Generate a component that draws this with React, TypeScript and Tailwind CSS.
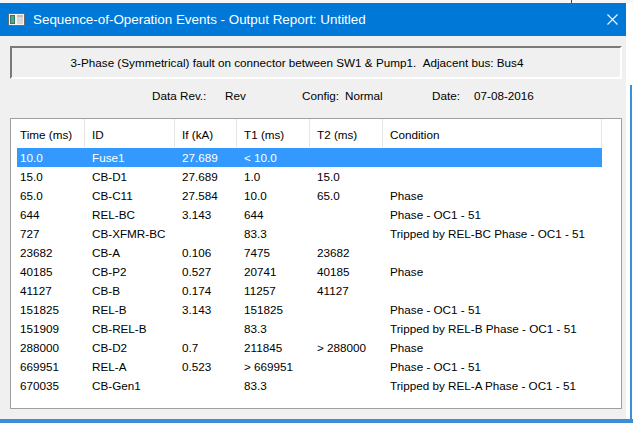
import React from 'react';

type Row = [string, string, string, string, string, string];

const ROWS: Row[] = [
    ['10.0', 'Fuse1', '27.689', '< 10.0', '', ''],
    ['15.0', 'CB-D1', '27.689', '1.0', '15.0', ''],
    ['65.0', 'CB-C11', '27.584', '10.0', '65.0', 'Phase'],
    ['644', 'REL-BC', '3.143', '644', '', 'Phase - OC1 - 51'],
    ['727', 'CB-XFMR-BC', '', '83.3', '', 'Tripped by REL-BC Phase - OC1 - 51'],
    ['23682', 'CB-A', '0.106', '7475', '23682', ''],
    ['40185', 'CB-P2', '0.527', '20741', '40185', 'Phase'],
    ['41127', 'CB-B', '0.174', '11257', '41127', ''],
    ['151825', 'REL-B', '3.143', '151825', '', 'Phase - OC1 - 51'],
    ['151909', 'CB-REL-B', '', '83.3', '', 'Tripped by REL-B Phase - OC1 - 51'],
    ['288000', 'CB-D2', '0.7', '211845', '> 288000', 'Phase'],
    ['669951', 'REL-A', '0.523', '> 669951', '', 'Phase - OC1 - 51'],
    ['670035', 'CB-Gen1', '', '83.3', '', 'Tripped by REL-A Phase - OC1 - 51'],
];

const HEADERS = ['Time (ms)', 'ID', 'If (kA)', 'T1 (ms)', 'T2 (ms)', 'Condition'];

// widths of columns 2..6 (first column differs between header and rows)
const COL_W = ['w-[90px]', 'w-[62px]', 'w-[73px]', 'w-[73px]', 'w-[219px]'];

const font = { fontFamily: '"Liberation Sans", Arial, sans-serif' };

const WindowIcon = () => (
    <svg width="17" height="13" viewBox="0 0 17 13">
        <rect x="0.5" y="0.5" width="16" height="12" fill="#f4f4f4" stroke="#6b6b6b" />
        <rect x="2" y="2" width="5" height="9" fill="#2f7a6a" />
        <rect x="3" y="3" width="3" height="7" fill="#5aa07a" />
        <rect x="9" y="2" width="6" height="9" fill="#d8d8d8" />
        <rect x="9" y="2" width="6" height="2" fill="#bdbdbd" />
    </svg>
);

const CloseIcon = () => (
    <svg width="11" height="11" viewBox="0 0 11 11">
        <path d="M0.5 0.5 L10.5 10.5 M10.5 0.5 L0.5 10.5" stroke="#fff" strokeWidth="1.1" />
    </svg>
);

export default function App() {
    return (
        <div className="w-[633px] h-[423px] overflow-hidden bg-white flex flex-col text-black" style={font}>
            {/* strip of desktop above the dialog */}
            <div className="h-[3px] flex shrink-0 bg-[#f7f7f7]">
                <div className="ml-[571px] w-px h-full bg-[#444]" />
            </div>

            <div className="flex-1 flex min-h-0">
                <div className="w-[626px] flex flex-col bg-[#f0f0f0]">
                    {/* title bar */}
                    <div className="h-[33px] shrink-0 bg-[#0078d7] flex items-center text-white">
                        <div className="ml-[8px] w-[17px] flex items-center">
                            <WindowIcon />
                        </div>
                        <span className="ml-[8px] text-[13.4px] leading-none">
                            Sequence-of-Operation Events - Output Report: Untitled
                        </span>
                        <div className="ml-auto mr-[8px] w-[11px] flex items-center">
                            <CloseIcon />
                        </div>
                    </div>

                    <div className="flex-1 flex flex-col pt-[10px] pb-[10px] pl-[10px] pr-[4px] text-[11.7px]">
                        {/* fault description */}
                        <div className="h-[33px] shrink-0 border-2 border-t-[#7a7a7a] border-l-[#7a7a7a] border-r-white border-b-white flex items-center justify-center pr-[38px]">
                            3-Phase (Symmetrical) fault on connector between SW1 &amp; Pump1.&nbsp;&nbsp;Adjacent bus: Bus4
                        </div>

                        {/* data rev / config / date */}
                        <div className="h-[16px] mt-[9px] mb-[14px] shrink-0 flex items-center whitespace-nowrap">
                            <span className="ml-[142px] w-[73px]">Data Rev.:</span>
                            <span className="w-[77px]">Rev</span>
                            <span className="w-[43px]">Config:</span>
                            <span className="w-[87px]">Normal</span>
                            <span className="w-[42px]">Date:</span>
                            <span>07-08-2016</span>
                        </div>

                        {/* list view */}
                        <div className="flex-1 bg-white border border-[#a0a0a0] flex flex-col">
                            <div className="h-[28px] shrink-0 flex">
                                <div className="w-[74px] pl-[9px] pt-[3px] flex items-center border-r border-[#e5e5e5]">
                                    {HEADERS[0]}
                                </div>
                                {HEADERS.slice(1).map((h, i) => (
                                    <div key={h} className={`${COL_W[i]} pl-[7px] pt-[3px] flex items-center border-r border-[#e5e5e5]`}>
                                        {h}
                                    </div>
                                ))}
                            </div>
                            <div className="mt-px flex flex-col">
                                {ROWS.map((r, idx) => (
                                    <div
                                        key={idx}
                                        className={`h-[19px] ml-[6px] w-[585px] flex items-center whitespace-nowrap ${idx === 0 ? 'bg-[#3399ff] text-white' : ''}`}
                                    >
                                        <div className="w-[68px] pl-[3px]">{r[0]}</div>
                                        {r.slice(1).map((c, i) => (
                                            <div key={i} className={`${COL_W[i]} pl-[7px]`}>{c}</div>
                                        ))}
                                    </div>
                                ))}
                            </div>
                        </div>
                    </div>
                </div>

                {/* edge of the window behind */}
                <div className="flex-1 flex flex-col">
                    <div className="h-[82px]" />
                    <div className="flex-1 ml-[4px] w-[2px] bg-[#3c8fd6]" />
                </div>
            </div>

            <div className="h-[4px] shrink-0 bg-[#3c8fd6]" />
        </div>
    );
}
